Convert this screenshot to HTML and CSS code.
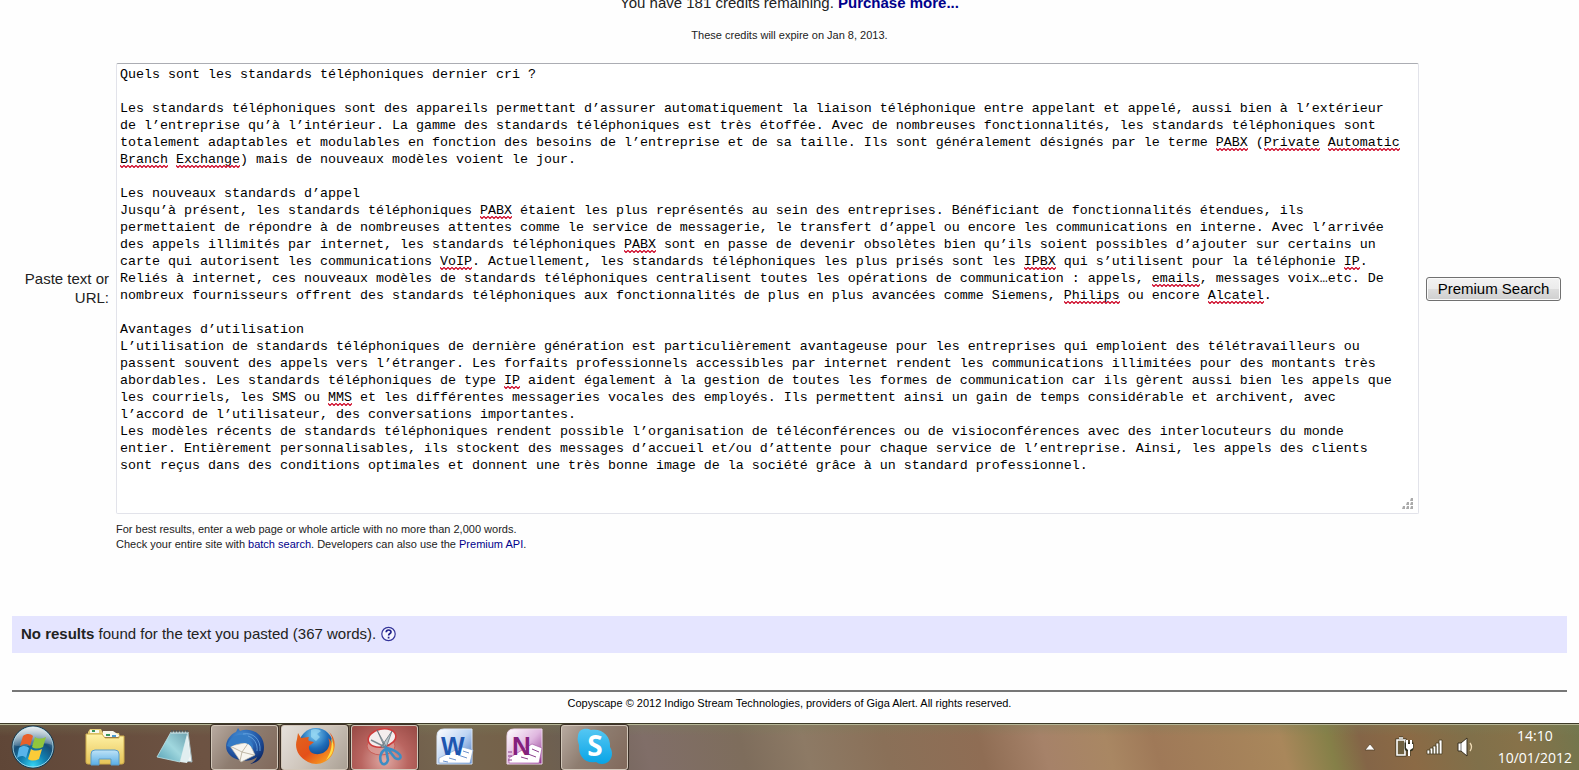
FILE: index.html
```html
<!DOCTYPE html>
<html lang="en">
<head>
<meta charset="utf-8">
<title>Copyscape Premium</title>
<link rel="stylesheet" href="styles.css">
</head>
<body>
<main class="page">
  <p class="credits">You have 181 credits remaining. <a href="#" class="strong-link">Purchase more...</a></p>
  <p class="expiry">These credits will expire on Jan 8, 2013.</p>

  <form class="search">
    <label class="search-label" for="source">Paste text or URL:</label>
    <div class="editor">
      <textarea class="source" id="source" rows="26" spellcheck="false">Quels sont les standards téléphoniques dernier cri ?

Les standards téléphoniques sont des appareils permettant d’assurer automatiquement la liaison téléphonique entre appelant et appelé, aussi bien à l’extérieur de l’entreprise qu’à l’intérieur. La gamme des standards téléphoniques est très étoffée. Avec de nombreuses fonctionnalités, les standards téléphoniques sont totalement adaptables et modulables en fonction des besoins de l’entreprise et de sa taille. Ils sont généralement désignés par le terme PABX (Private Automatic Branch Exchange) mais de nouveaux modèles voient le jour.

Les nouveaux standards d’appel
Jusqu’à présent, les standards téléphoniques PABX étaient les plus représentés au sein des entreprises. Bénéficiant de fonctionnalités étendues, ils permettaient de répondre à de nombreuses attentes comme le service de messagerie, le transfert d’appel ou encore les communications en interne. Avec l’arrivée des appels illimités par internet, les standards téléphoniques PABX sont en passe de devenir obsolètes bien qu’ils soient possibles d’ajouter sur certains un carte qui autorisent les communications VoIP. Actuellement, les standards téléphoniques les plus prisés sont les IPBX qui s’utilisent pour la téléphonie IP. Reliés à internet, ces nouveaux modèles de standards téléphoniques centralisent toutes les opérations de communication : appels, emails, messages voix…etc. De nombreux fournisseurs offrent des standards téléphoniques aux fonctionnalités de plus en plus avancées comme Siemens, Philips ou encore Alcatel.

Avantages d’utilisation
L’utilisation de standards téléphoniques de dernière génération est particulièrement avantageuse pour les entreprises qui emploient des télétravailleurs ou passent souvent des appels vers l’étranger. Les forfaits professionnels accessibles par internet rendent les communications illimitées pour des montants très abordables. Les standards téléphoniques de type IP aident également à la gestion de toutes les formes de communication car ils gèrent aussi bien les appels que les courriels, les SMS ou MMS et les différentes messageries vocales des employés. Ils permettent ainsi un gain de temps considérable et archivent, avec l’accord de l’utilisateur, des conversations importantes.
Les modèles récents de standards téléphoniques rendent possible l’organisation de téléconférences ou de visioconférences avec des interlocuteurs du monde entier. Entièrement personnalisables, ils stockent des messages d’accueil et/ou d’attente pour chaque service de l’entreprise. Ainsi, les appels des clients sont reçus dans des conditions optimales et donnent une très bonne image de la société grâce à un standard professionnel.</textarea>
      <div class="spelling" aria-hidden="true">
        <i style="--row:4;--col:137;--len:4"></i>
        <i style="--row:4;--col:143;--len:7"></i>
        <i style="--row:4;--col:151;--len:9"></i>
        <i style="--row:5;--col:0;--len:6"></i>
        <i style="--row:5;--col:7;--len:8"></i>
        <i style="--row:8;--col:45;--len:4"></i>
        <i style="--row:10;--col:63;--len:4"></i>
        <i style="--row:11;--col:40;--len:4"></i>
        <i style="--row:11;--col:113;--len:4"></i>
        <i style="--row:11;--col:153;--len:2"></i>
        <i style="--row:12;--col:129;--len:6"></i>
        <i style="--row:13;--col:118;--len:7"></i>
        <i style="--row:13;--col:136;--len:7"></i>
        <i style="--row:18;--col:48;--len:2"></i>
        <i style="--row:19;--col:26;--len:3"></i>
      </div>
      <svg class="grip" width="12" height="12" viewBox="0 0 12 12" aria-hidden="true"><path fill="#aaa" d="M9 0h2v3H8zM5 4h2v3H4zM9 4h2v3H8zM1 8h2v3H0zM5 8h2v3H4zM9 8h2v3H8z"/></svg>
    </div>
    <button class="search-button" type="button">Premium Search</button>
    <p class="hint">For best results, enter a web page or whole article with no more than 2,000 words.<br>Check your entire site with <a href="#">batch search</a>. Developers can also use the <a href="#">Premium API</a>.</p>
  </form>

  <section class="results">
    <span><b>No results</b> found for the text you pasted (367 words).</span>
    <a href="#" class="help" aria-label="Help"><svg width="15" height="16" viewBox="0 0 15 16"><circle cx="7.500" cy="8" r="6.700" fill="#f4f4ff" stroke="#33339a" stroke-width="1.200"/><path d="M5.200 6.300c0-3 4.800-3 4.800-.4C10 7.600 7.600 7.500 7.600 9.600M7.600 10.800v1.700" fill="none" stroke="#22228c" stroke-width="1.700"/></svg></a>
  </section>

  <footer class="footer">Copyscape © 2012 Indigo Stream Technologies, providers of Giga Alert. All rights reserved.</footer>
</main>

<nav class="taskbar" aria-label="Taskbar">
  <button class="start" type="button" aria-label="Start">
    <svg width="46" height="44" viewBox="0 0 46 44">
      <defs>
        <radialGradient id="orb" cx=".5" cy=".95" r=".9"><stop offset="0" stop-color="#35d5f4"/><stop offset=".35" stop-color="#117fb0"/><stop offset=".65" stop-color="#174f78"/><stop offset="1" stop-color="#8fa9b8"/></radialGradient>
        <linearGradient id="gloss" x1="0" y1="0" x2="0" y2="1"><stop offset="0" stop-color="#fff" stop-opacity=".75"/><stop offset="1" stop-color="#fff" stop-opacity=".15"/></linearGradient>
      </defs>
      <circle cx="23" cy="22" r="21" fill="url(#orb)" stroke="#17384d"/>
      <circle cx="23" cy="22" r="20" fill="none" stroke="#b7e1ee" stroke-opacity=".8"/>
      <path d="M4 20a19 18 0 0 1 38 0c-12-5-25 5-38 0z" fill="url(#gloss)"/>
      <path d="M13 11c4-3 8-2 10 0l-3 10c-3-3-6-2-10 0z" fill="#e9602a"/>
      <path d="M25 12c3 2 7 2 11 0l-3 10c-4 2-8 2-11 0z" fill="#91c63d"/>
      <path d="M9 23c4-3 8-2 10 0l-3 10c-3-3-6-2-9 0z" fill="#58b4ea"/>
      <path d="M21 24c3 2 7 2 11 0l-3 10c-4 2-8 2-11 0z" fill="#fbcb38"/>
    </svg>
  </button>
  <div class="tasks">
    <button class="task" type="button" aria-label="Explorer">
      <svg width="44" height="42" viewBox="0 0 44 42">
        <defs><linearGradient id="fold" x1="0" y1="0" x2="0" y2="1"><stop offset="0" stop-color="#fff2a6"/><stop offset="1" stop-color="#e6c458"/></linearGradient><linearGradient id="stand" x1="0" y1="0" x2="0" y2="1"><stop offset="0" stop-color="#bfe3f7"/><stop offset="1" stop-color="#59aee5"/></linearGradient></defs>
        <path d="M5 6l2-3h11l2 4h16l1 4H5z" fill="#e6cf7a"/>
        <path d="M7 4h9v3H7zM20 5h10l6 4v2H20z" fill="#f8f8ee"/>
        <path d="M9 4h3v2H9zM23 8h4v2h-4z" fill="#37975b"/><path d="M29 9h4v2h-4z" fill="#4e9bd0"/>
        <path d="M3 8h16l3 4h14v-2h5v26q0 2-2 2H5q-2 0-2-2z" fill="url(#fold)" stroke="#cfae4c"/>
        <path d="M8 39V28q0-4 4-4h20q4 0 4 4v11h-8v-6H16v6z" fill="url(#stand)" stroke="#5c9dc8"/>
      </svg>
    </button>
    <button class="task" type="button" aria-label="Notepad">
      <svg width="44" height="42" viewBox="0 0 44 42">
        <defs><linearGradient id="pad" x1="1" y1="0" x2="0" y2="1"><stop offset="0" stop-color="#6a9fae"/><stop offset=".5" stop-color="#a0d7de"/><stop offset="1" stop-color="#55a1b5"/></linearGradient></defs>
        <path d="M35 6l4 30-12-2z" fill="#f2f6f6" stroke="#9fb3b8"/>
        <path d="M18 6h17L27 36 4 31z" fill="url(#pad)" stroke="#bfe3e8" stroke-width=".8"/>
        <path d="M34 9l-7 27 7 1 3-7z" fill="#e1eef0"/>
        <path d="M19 4v3M22 4v3M25 4v3M28 4v3M31 4v3M34 4v3" stroke="#4a5357" stroke-width="1.500"/><path d="M18 7h17" stroke="#d9e6e8"/>
      </svg>
    </button>
    <button class="task open" type="button" aria-label="Thunderbird">
      <svg width="44" height="42" viewBox="0 0 44 42">
        <defs><radialGradient id="bird" cx=".4" cy=".3" r=".75"><stop offset="0" stop-color="#4c9ade"/><stop offset=".6" stop-color="#2256a5"/><stop offset="1" stop-color="#0c2764"/></radialGradient></defs>
        <path d="M15 2l2 3c10-4 24 2 24 16 0 10-6 16-14 17 4-2 6-4 7-7C27 37 9 36 4 25 1 17 6 9 13 6z" fill="url(#bird)"/>
        <path d="M7 20l19-4 6 13-14 7z" fill="#f7f5ef" stroke="#bcb6a7" stroke-width=".7"/>
        <path d="M7 20l12 6 7-10M17 35l2-9 12 3" fill="none" stroke="#b4aa95" stroke-width=".8"/>
        <path d="M4 20C7 8 20 6 28 12l-4 1c4 1 7 6 6 10-5-8-12-8-23-2z" fill="#347bc5"/>
        <path d="M20 8c10-2 18 5 17 17M25 10c6 2 10 8 9 15" fill="none" stroke="#6ba9e4" stroke-width=".8"/>
      </svg>
    </button>
    <button class="task open bright" type="button" aria-label="Firefox">
      <svg width="44" height="42" viewBox="0 0 44 42">
        <defs><radialGradient id="globe" cx=".45" cy=".2" r=".8"><stop offset="0" stop-color="#79c9f0"/><stop offset=".5" stop-color="#1f6cb8"/><stop offset="1" stop-color="#092d70"/></radialGradient><linearGradient id="fox" x1="0" y1="0" x2="1" y2="1"><stop offset="0" stop-color="#e1671d"/><stop offset=".5" stop-color="#e4501a"/><stop offset="1" stop-color="#ffb823"/></linearGradient></defs>
        <circle cx="23" cy="19" r="17" fill="url(#globe)"/>
        <path d="M18 4c4-2 8-1 10 1l-4 3 3 3-4 4-5-4z" fill="#9edbf3" opacity=".7"/>
        <path d="M5 7l3 5 8-1c-1 2-1 3 0 4l5 1-5 4c-1 7 7 10 14 7 6-3 8-10 5-15 3 2 4 5 4 8 2-6-1-12-4-15 6 5 8 12 6 19-3 12-16 17-26 12C5 31 1 22 4 13z" fill="url(#fox)"/>
        <path d="M38 12c5 8 2 18-5 22 4-6 7-13 5-22z" fill="#ffdb45"/>
      </svg>
    </button>
    <button class="task open red" type="button" aria-label="Snipping Tool">
      <svg width="44" height="42" viewBox="0 0 44 42">
        <ellipse cx="18" cy="20" rx="14" ry="9" fill="#dc9d98" stroke="#c9564f" opacity=".8"/>
        <ellipse cx="19" cy="12" rx="14" ry="9" fill="#f4eded" stroke="#cf3b3b" stroke-width="1.600" transform="rotate(-12 19 12)"/>
        <path d="M14 4l8 18 3 2zM29 5L18 21l5 1z" fill="#b9c5cb" stroke="#65747c" stroke-width=".8"/>
        <path d="M8 14l18 9" stroke="#7c888f" stroke-width="1.500"/>
        <path d="M23 23c-5 2-7 8-5 13 2 4 6 2 7-2zM24 22c4 1 9 2 13 7 2 4-2 5-5 3z" fill="none" stroke="#3d8dc4" stroke-width="2.600"/>
      </svg>
    </button>
    <button class="task" type="button" aria-label="Word">
      <svg width="44" height="42" viewBox="0 0 44 42">
        <defs><linearGradient id="word" x1="0" y1="0" x2="1" y2="1"><stop offset="0" stop-color="#fff"/><stop offset=".5" stop-color="#bdd4f3"/><stop offset="1" stop-color="#3e70be"/></linearGradient></defs>
        <path d="M4 38V10q0-7 7-7h28v35z" fill="url(#word)" stroke="#dae7f8"/>
        <path d="M6 32l23-11 11 3-3 13H6z" fill="#fff" stroke="#88a7d4" stroke-width=".7"/>
        <path d="M16 32l7 2M25 29l9 3M30 25l6 2M10 35l5 1" stroke="#6c93ce"/>
        <text x="8" y="29" class="letter" fill="#1d56b0" font-size="25">W</text>
      </svg>
    </button>
    <button class="task" type="button" aria-label="OneNote">
      <svg width="44" height="42" viewBox="0 0 44 42">
        <defs><linearGradient id="note" x1="0" y1="0" x2="1" y2="1"><stop offset="0" stop-color="#fff"/><stop offset=".5" stop-color="#e0b8e0"/><stop offset="1" stop-color="#8b2f8a"/></linearGradient></defs>
        <path d="M4 38V10q0-7 7-7h28v35z" fill="url(#note)" stroke="#f0d7ee"/>
        <path d="M6 32l23-14 10 4-3 15H6z" fill="#fff" stroke="#a85ba8" stroke-width=".7"/>
        <path d="M18 31l7 2M25 28l8 3M29 23l7 3M5 26h4M5 30h4M5 34h4" stroke="#8b3d8b"/>
        <text x="9" y="29" class="letter" fill="#84207c" font-size="26">N</text>
      </svg>
    </button>
    <button class="task open" type="button" aria-label="Skype">
      <svg width="44" height="42" viewBox="0 0 44 42">
        <defs><linearGradient id="sky" x1="0" y1="0" x2="0" y2="1"><stop offset="0" stop-color="#55c7f3"/><stop offset="1" stop-color="#08a4e6"/></linearGradient></defs>
        <path d="M5 10C5 3 13 1 18 4c11-2 20 6 19 17 5 8 0 17-8 17-3 0-4-1-6-2C12 38 5 30 6 19 5 16 4 13 5 10z" fill="url(#sky)"/>
        <text x="22" y="30" text-anchor="middle" class="round" fill="#fff" font-size="28">S</text>
      </svg>
    </button>
  </div>
  <div class="tray">
    <svg class="arrow" width="12" height="8" viewBox="0 0 12 8"><path d="M6 1l5 6H1z" fill="#fff" stroke="#4d3d25" stroke-width=".7"/></svg>
    <svg width="20" height="22" viewBox="0 0 20 22"><g stroke="#3b3420" stroke-width="3" fill="none"><path d="M3 4h8v15H3zM5 2h4"/></g><path d="M3 4h8v15H3zM5 2h4" stroke="#fff" stroke-width="1.600" fill="#6e6040"/><path d="M11 8h8M12 8v4q0 2 3 2t3-2V8zM13 4v4M17 4v4M15 14v6" stroke="#30301e" stroke-width="3"/><path d="M12 8h7v4l-3 2v6h-2v-6l-2-2zM12 4h2v4h-2zM16 4h2v4h-2z" fill="#fff"/></svg>
    <svg width="18" height="16" viewBox="0 0 18 16"><path d="M1 11h3v4H1zM4 9h3v6H4zM7 7h3v8H7zM10 4h3v11h-3zM13 1h3v14h-3z" fill="#fff" stroke="#4a4025" stroke-width=".8"/></svg>
    <svg width="20" height="20" viewBox="0 0 20 20"><path d="M2 6h3l6-5v18l-6-5H2z" fill="#fff" stroke="#393020"/><path d="M5 6v8" stroke="#777"/><path d="M14 6q3 4 0 8" fill="none" stroke="#eedbb5" stroke-width="1.300"/></svg>
    <time class="clock">14:10<br>10/01/2012</time>
  </div>
</nav>
</body>
</html>
```
FILE: styles.css
```css
* {
  box-sizing: border-box;
}

body {
  margin: 0;
  min-height: 100vh;
  display: flex;
  flex-direction: column;
  overflow: hidden;
  background: #fefefe;
  color: #222;
  font-family: "Liberation Sans", Arial, sans-serif;
  font-size: 15px;
  line-height: 19px;
}

p {
  margin: 0;
}

a {
  color: #00008b;
  text-decoration: none;
}

.page {
  flex: 1;
  padding: 0 12px;
  margin-top: -7px;
}

.credits {
  text-align: center;
}

.strong-link {
  font-weight: bold;
}

.expiry {
  margin-top: 16px;
  font-size: 11px;
  line-height: 15px;
  text-align: center;
}

.search {
  display: grid;
  grid-template-columns: 97px 1fr 135px;
  column-gap: 7px;
  align-items: center;
  margin-top: 20px;
  padding-right: 6px;
}

.search-label {
  padding-bottom: 2px;
  text-align: right;
}

.editor {
  position: relative;
  font-family: "Liberation Mono", "Courier New", monospace;
  font-size: 10pt;
  line-height: 17px;
}

.source {
  display: block;
  width: 100%;
  margin: 0;
  padding: 2px 14px 5px 3px;
  border: 1px solid #e2e3ea;
  border-top-color: #abadb3;
  border-radius: 2px;
  background: #fff;
  color: #000;
  font: inherit;
  overflow: hidden;
  resize: none;
}

.spelling {
  position: absolute;
  inset: 3px 4px;
  pointer-events: none;
}

.spelling i {
  position: absolute;
  top: calc(var(--row) * 17px + 14px);
  left: calc(var(--col) * 1ch);
  width: calc(var(--len) * 1ch);
  height: 3px;
  background: url("data:image/svg+xml,%3Csvg xmlns='http://www.w3.org/2000/svg' width='4' height='3'%3E%3Cpath d='M-1 -.5L2 2.500L5 -.5' fill='none' stroke='%23cc0020' stroke-width='1.200'/%3E%3C/svg%3E") repeat-x;
}

.grip {
  position: absolute;
  right: 5px;
  bottom: 4px;
}

.search-button {
  height: 24px;
  padding: 0;
  border: 1px solid #707070;
  border-radius: 3px;
  background: linear-gradient(#f2f2f2 0, #ebebeb 50%, #dddddd 50%, #cfcfcf 100%);
  box-shadow: inset 0 0 0 1px #fafafa;
  color: #000;
  font: inherit;
}

.hint {
  grid-column: 2;
  margin-top: 8px;
  font-size: 11px;
  line-height: 15px;
}

.results {
  display: flex;
  align-items: center;
  gap: 5px;
  margin-top: 64px;
  padding: 8px 9px 10px;
  background: #e5e5ff;
}

.help {
  display: flex;
}

.footer {
  margin-top: 37px;
  padding: 4px 0 12px;
  border-top: 2px solid #777;
  color: #000;
  font-size: 11px;
  line-height: 15px;
  text-align: center;
}

.taskbar {
  display: flex;
  align-items: center;
  height: 47px;
  border-top: 1px solid #3d3a28;
  box-shadow: inset 0 1px #b5b596;
  background:
    linear-gradient(rgba(120, 130, 90, .3), transparent 12px),
    linear-gradient(75deg, #5f4637 0%, #6d5343 13%, #6a5446 22%, #75654f 28%, #75624a 32%, #6c5f52 36%, #806e68 41%, #7e6d5c 47%, #8d7a65 51%, #8a7058 56%, #8f6d54 62%, #a68269 66%, #a98763 70%, #9f7958 73%, #a9875b 81%, #858048 84%, #846547 86%, #8b6a45 89%, #80704a 93%, #877249 96%, #72764d 100%);
}

.taskbar button {
  display: flex;
  align-items: center;
  justify-content: center;
  padding: 0;
  border: 1px solid transparent;
  background: none;
}

.start {
  width: 66px;
}

.tasks {
  display: flex;
  flex: 1;
  gap: 3px;
  padding-left: 5px;
}

.task {
  width: 67px;
  height: 45px;
  border-radius: 3px;
}

.taskbar .open {
  border-color: #d2c7b9;
  box-shadow: 0 0 0 1px #3c3027;
  background: linear-gradient(125deg, #b8aaa0, #8e7d70 45%, #81695b);
}

.taskbar .bright {
  background: linear-gradient(125deg, #e6e1dc, #cec5bb 50%, #aaa094);
}

.taskbar .red {
  background: radial-gradient(circle at 50% 80%, #e0aaa4, #b96560 50%, #964944);
}

.letter {
  font-family: "Liberation Sans", Arial, sans-serif;
  font-weight: bold;
}

.round {
  font-family: "Open Sans", sans-serif;
  font-weight: bold;
}

.tray {
  display: flex;
  align-items: center;
  gap: 12px;
  padding-right: 7px;
}

.arrow {
  margin-right: 6px;
}

.clock {
  margin-left: 10px;
  color: #fff;
  font-family: "Open Sans", sans-serif;
  font-size: 14px;
  line-height: 22px;
  text-align: center;
}
```
